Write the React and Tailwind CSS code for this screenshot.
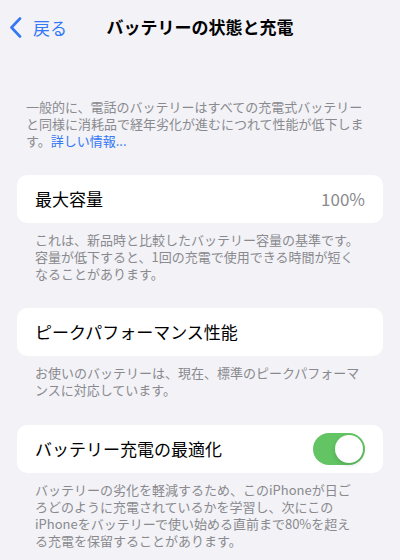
import React from 'react';

const FONT = { fontFamily: '"Noto Sans CJK JP", "Noto Sans", sans-serif' };

const Footer = ({ lines, className = '' }) => (
  <div className={`px-[35px] pt-[8px] text-[13px] leading-[17px] text-[#8a8a8e] ${className}`}>
    {lines.map((l, i) => (
      <div key={i} className="whitespace-nowrap">{l}</div>
    ))}
  </div>
);

const Card = ({ children }) => (
  <div className="mx-[17px] h-[48px] rounded-[10px] bg-white px-[18px] flex items-center justify-between">
    {children}
  </div>
);

const Toggle = () => (
  <div className="w-[52px] h-[32px] rounded-full bg-[#62c462] p-[2px] flex justify-end">
    <div className="w-[28px] h-[28px] rounded-full bg-white shadow-[0_2px_4px_rgba(0,0,0,0.15)]" />
  </div>
);

export default function App() {
  return (
    <div className="w-[400px] h-[560px] overflow-hidden bg-[#f2f2f7]" style={FONT}>
      {/* Nav bar */}
      <div className="relative h-[54px] flex items-center justify-center">
        <div className="absolute left-[9px] top-[17px] flex items-center gap-[10px] text-[#3478f6]">
          <svg width="14" height="21" viewBox="0 0 14 21" fill="none">
            <path d="M11 1.5 L2.5 10.5 L11 19.5" stroke="#3478f6" strokeWidth="2.6" strokeLinecap="round" strokeLinejoin="round" />
          </svg>
          <span className="text-[17px] leading-[20px]">戻る</span>
        </div>
        <h1 className="text-[17px] font-bold text-black leading-[20px]">バッテリーの状態と充電</h1>
      </div>

      {/* Intro */}
      <div className="pt-[44px] px-[26px] text-[13px] leading-[17px] text-[#8a8a8e]">
        <div className="whitespace-nowrap">一般的に、電話のバッテリーはすべての充電式バッテリー</div>
        <div className="whitespace-nowrap">と同様に消耗品で経年劣化が進むにつれて性能が低下しま</div>
        <div className="whitespace-nowrap">
          す。<span className="text-[#3478f6]">詳しい情報...</span>
        </div>
      </div>

      <div className="h-[26px]" />
      <Card>
        <span className="text-[17px] text-black">最大容量</span>
        <span className="text-[17px] text-[#8a8a8e]">100%</span>
      </Card>
      <Footer
        lines={[
          'これは、新品時と比較したバッテリー容量の基準です。',
          '容量が低下すると、1回の充電で使用できる時間が短く',
          'なることがあります。',
        ]}
      />

      <div className="h-[26px]" />
      <Card>
        <span className="text-[17px] text-black">ピークパフォーマンス性能</span>
      </Card>
      <Footer
        lines={[
          'お使いのバッテリーは、現在、標準のピークパフォーマ',
          'ンスに対応しています。',
        ]}
      />

      <div className="h-[27px]" />
      <Card>
        <span className="text-[17px] text-black">バッテリー充電の最適化</span>
        <Toggle />
      </Card>
      <Footer
        lines={[
          'バッテリーの劣化を軽減するため、このiPhoneが日ご',
          'ろどのように充電されているかを学習し、次にこの',
          'iPhoneをバッテリーで使い始める直前まで80%を超え',
          'る充電を保留することがあります。',
        ]}
      />
    </div>
  );
}
